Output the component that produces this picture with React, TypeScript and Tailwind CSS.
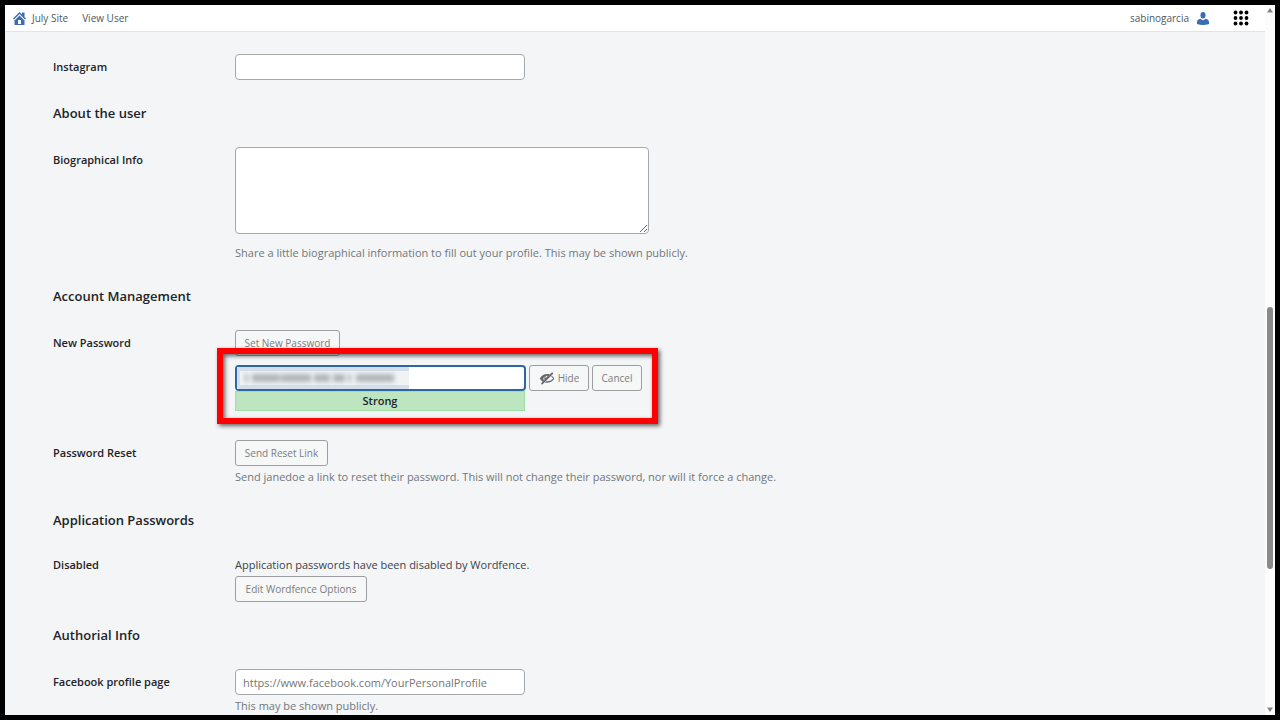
import React from 'react';

const inputClass =
  'block h-[26px] w-[290px] max-w-full rounded-[4px] border border-[#a5a8ac] bg-white px-[7px] text-[11px] text-[#2c3338] placeholder-[#757575] outline-none';
const buttonClass =
  'flex h-[26px] items-center justify-center rounded-[3px] border border-[#9c9ea0] bg-[#f6f7f7] text-[10px] text-[#7c7e80]';

const HomeIcon: React.FC = () => (
  <svg viewBox="0 0 26 26" className="h-[13px] w-[13px]" fill="#3d6db0" aria-hidden="true">
    <path d="M13 0 18 5V1h5v9l3 3-2 2L13 4 2 15l-2-2z" />
    <path d="M13 7 23 17v9H3v-9z" />
    <path d="M10 16h6v8h-6z" fill="#fff" />
  </svg>
);

const UserIcon: React.FC = () => (
  <svg viewBox="0 0 24 26" className="h-[13px] w-3" fill="#3a6cb0" aria-hidden="true">
    <ellipse cx="12" cy="6.5" rx="5" ry="6.5" />
    <path d="M7 13.500C2 14 0 17 0 21v3q12 4 24 0v-3c0-4-2-7-7-7.500Q12 19 7 13.500z" />
  </svg>
);

const GridIcon: React.FC = () => (
  <svg viewBox="0 0 16 16" className="h-4 w-4" fill="#000" aria-hidden="true">
    {[2.500, 8, 13.500].map((y) => [2.500, 8, 13.500].map((x) => <circle key={`${x}-${y}`} cx={x} cy={y} r="1.900" />))}
  </svg>
);

const HiddenIcon: React.FC = () => (
  <svg viewBox="0 0 20 20" className="h-4 w-4" fill="#666b70" aria-hidden="true">
    <path d="M17.200 3.300l.160.170c.390.390.390 1.020 0 1.410L4.550 17.700c-.390.390-1.030.390-1.410 0l-.170-.170c-.390-.390-.390-1.020 0-1.410l1.590-1.600c-1.570-1-2.760-2.300-3.560-3.930.810-1.650 2.030-2.980 3.640-3.990S8.040 5.090 10 5.090c1.200 0 2.330.210 3.400.600l2.380-2.390c.390-.390 1.030-.390 1.420 0zm-7.090 4.010c-1.150 0-2.090.93-2.090 2.090 0 .290.060.560.170.810l2.730-2.730c-.250-.110-.520-.170-.810-.170zM5.500 10.590c0 .880.250 1.690.690 2.380l.790-.790c-.290-.460-.460-1.020-.460-1.590 0-1.140.530-2.150 1.350-2.810-1.060.490-2.370 1.560-2.370 2.810zm13.500 0c-.970 2.040-2.630 3.590-4.720 4.490-1.370.590-2.800.830-4.280.780-.870 0-1.710-.100-2.510-.320l1.540-1.540c.320.050.640.080.970.080 3.500 0 6.160-1.490 7.690-3.490-.650-.970-1.500-1.790-2.540-2.460l.900-.900c1.300.860 2.300 1.980 2.950 3.360z" />
  </svg>
);

interface RowProps {
  label: string;
  htmlFor: string;
  compact?: boolean;
  children: React.ReactNode;
}

const Row: React.FC<RowProps> = ({ label, htmlFor, compact, children }) => (
  <div className="flex">
    <label
      htmlFor={htmlFor}
      className={`w-[182px] shrink-0 text-[11px] font-semibold text-[#1d2327] ${
        compact ? 'leading-[22px]' : 'leading-[26px]'
      }`}
    >
      {label}
    </label>
    <div className="min-w-0 grow">{children}</div>
  </div>
);

const Heading: React.FC<{ children: React.ReactNode }> = ({ children }) => (
  <h2 className="mt-[21px] mb-[22px] text-[13px] leading-6 font-semibold text-[#1d2327]">{children}</h2>
);

const Description: React.FC<{ children: React.ReactNode }> = ({ children }) => (
  <p className="mt-px text-[11px] leading-5 text-[#72777c]">{children}</p>
);

const TopBar: React.FC = () => (
  <header className="flex h-[27px] shrink-0 items-center justify-between border-b border-[#e2e3e4] bg-white pr-4 pl-2 text-[10px] text-[#50575e]">
    <nav className="flex items-center gap-[14px]">
      <a href="#site" className="flex items-center gap-[6px]">
        <HomeIcon />
        July Site
      </a>
      <a href="#user">View User</a>
    </nav>
    <div className="flex items-center gap-6">
      <a href="#account" className="flex items-center gap-2">
        sabinogarcia
        <UserIcon />
      </a>
      <button type="button" aria-label="Apps">
        <GridIcon />
      </button>
    </div>
  </header>
);

const Scrollbar: React.FC = () => (
  <div className="flex w-[10px] shrink-0 flex-col items-center bg-[#fcfcfc] py-[3px]" aria-hidden="true">
    <svg viewBox="0 0 6 5" className="h-[5px] w-[6px]" fill="#858585">
      <path d="M3 0 6 4.500H0z" />
    </svg>
    <div className="flex-[294]" />
    <div className="w-[6px] flex-[262] rounded-full bg-[#8a8a8a]" />
    <div className="flex-[138]" />
    <svg viewBox="0 0 6 5" className="h-[5px] w-[6px]" fill="#858585">
      <path d="M3 5 6 .500H0z" />
    </svg>
  </div>
);

// Smudge that hides the generated password, drawn as [start, width] strokes
const strokes = [
  [8, 3],
  [15, 28],
  [44, 30],
  [77, 16],
  [96, 12],
  [111, 3],
  [119, 38],
];

const Smudge: React.FC = () => (
  <div className="absolute top-[2px] left-[2px] h-[22px] w-[172px] overflow-hidden bg-[#d3dfe9]" aria-hidden="true">
    <svg viewBox="0 0 172 22" className="h-full w-full">
      <rect x="3" y="4" width="172" height="14" fill="#f0f2f4" />
      <g fill="#9a9ea2" className="blur-[2px]">
        {strokes.map(([x, width]) => (
          <rect key={x} x={x} y="7" width={width} height="8" opacity="0.7" />
        ))}
      </g>
    </svg>
  </div>
);

const PasswordFields: React.FC = () => (
  <>
    <button type="button" className={`${buttonClass} w-[105px]`}>
      Set New Password
    </button>
    <div className="relative mt-[9px] w-[407px]">
      <div className="flex items-center gap-[3px]">
        <div className="relative">
          <input
            id="password"
            type="password"
            className="block h-[26px] w-[291px] rounded-[4px] border-2 border-[#2c66a3] bg-white px-2 text-[11px] outline-none"
          />
          <Smudge />
        </div>
        <button type="button" className={`${buttonClass} w-[60px] gap-[3px]`}>
          <HiddenIcon />
          Hide
        </button>
        <button type="button" className={`${buttonClass} w-[50px]`}>
          Cancel
        </button>
      </div>
      <div className="h-5 w-[290px] border border-[#9fe0a4] bg-[#bde5c0] text-center text-[11px] leading-[18px] font-semibold text-[#1d2327]">
        Strong
      </div>
      <div className="pointer-events-none absolute -top-[17px] -right-4 -bottom-[13px] -left-[18px] border-6 border-[#fe0000] drop-shadow-[2px_2px_2px_rgba(0,0,0,0.6)]" />
    </div>
  </>
);

const App: React.FC = () => (
  <div className="h-screen bg-black p-[5px] font-['Open_Sans',sans-serif]">
    <div className="flex h-full overflow-hidden">
      <div className="flex min-w-0 grow flex-col bg-[#f3f5f7]">
        <TopBar />
        <main className="min-h-0 grow overflow-hidden pt-[22px] pl-12">
          <form>
            <Row label="Instagram" htmlFor="instagram">
              <input id="instagram" type="text" className={inputClass} />
            </Row>

            <Heading>About the user</Heading>
            <Row label="Biographical Info" htmlFor="bio">
              <textarea
                id="bio"
                className="block h-[87px] w-[414px] max-w-full rounded-[4px] border border-[#a5a8ac] bg-white outline-none"
              />
              <div className="pt-2">
                <Description>
                  Share a little biographical information to fill out your profile. This may be shown publicly.
                </Description>
              </div>
            </Row>

            <Heading>Account Management</Heading>
            <Row label="New Password" htmlFor="password">
              <PasswordFields />
            </Row>
            <div className="pt-[29px]">
              <Row label="Password Reset" htmlFor="reset">
                <button id="reset" type="button" className={`${buttonClass} w-[93px]`}>
                  Send Reset Link
                </button>
                <Description>
                  Send janedoe a link to reset their password. This will not change their password, nor will it force a
                  change.
                </Description>
              </Row>
            </div>

            <Heading>Application Passwords</Heading>
            <Row label="Disabled" htmlFor="wordfence" compact>
              <p className="text-[11px] leading-[22px] text-[#3c434a]">
                Application passwords have been disabled by Wordfence.
              </p>
              <button id="wordfence" type="button" className={`${buttonClass} w-[132px]`}>
                Edit Wordfence Options
              </button>
            </Row>

            <Heading>Authorial Info</Heading>
            <Row label="Facebook profile page" htmlFor="facebook">
              <input
                id="facebook"
                type="url"
                placeholder="https://www.facebook.com/YourPersonalProfile"
                className={inputClass}
              />
              <Description>This may be shown publicly.</Description>
            </Row>
          </form>
        </main>
      </div>
      <Scrollbar />
    </div>
  </div>
);

export default App;
